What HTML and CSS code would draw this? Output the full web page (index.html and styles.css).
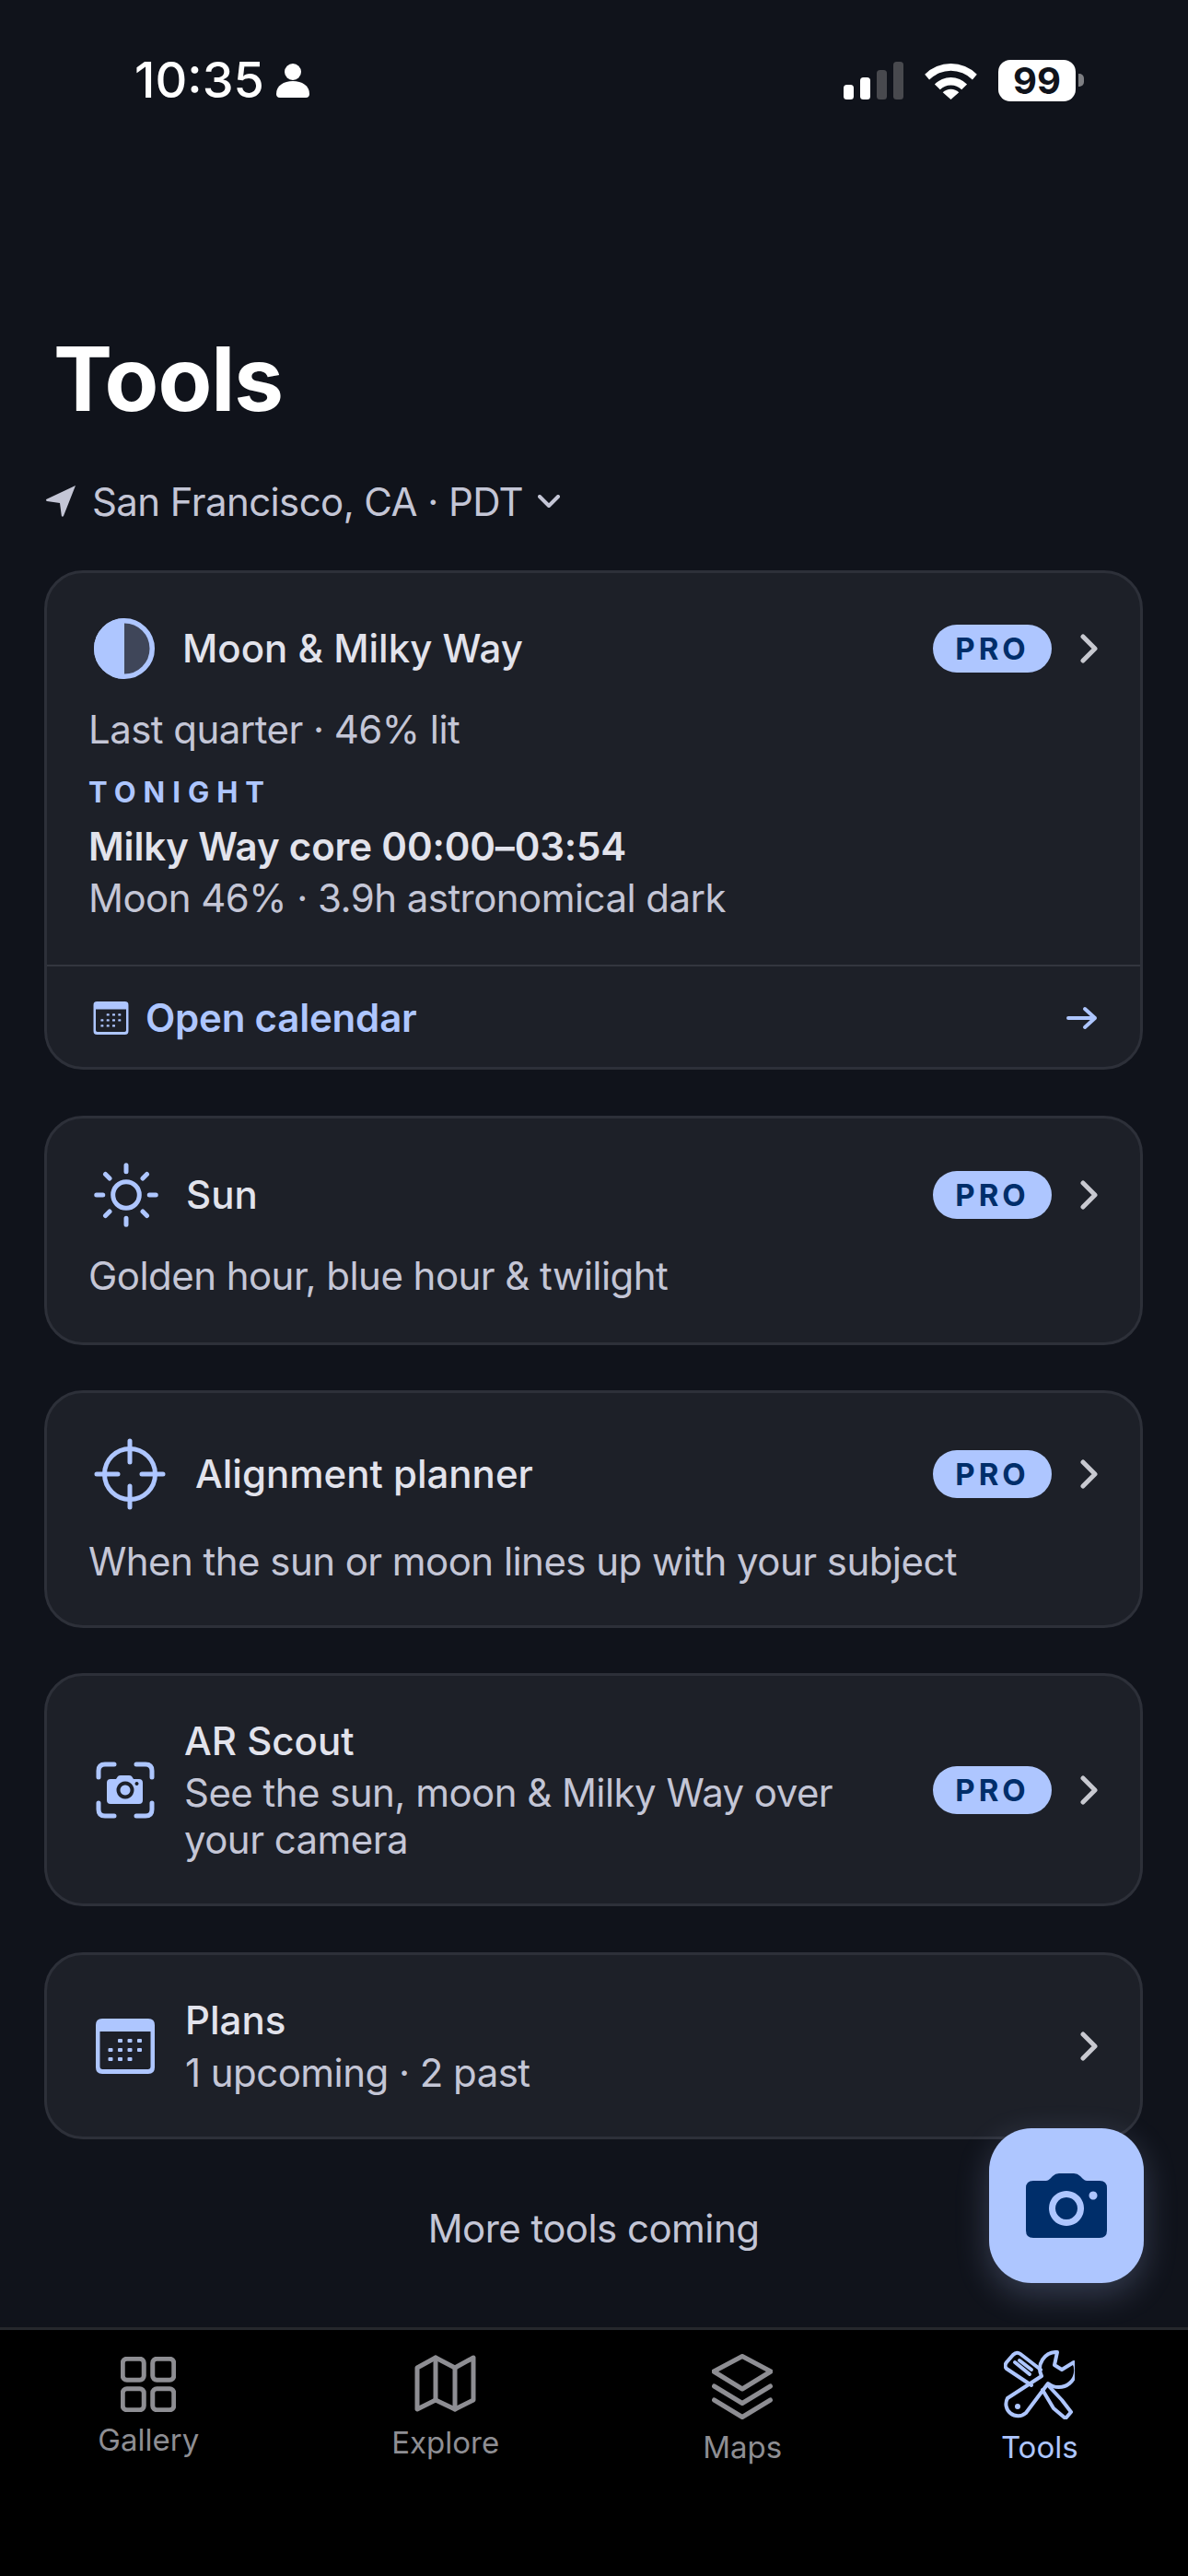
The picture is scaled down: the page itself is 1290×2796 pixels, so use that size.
FILE: index.html
```html
<!DOCTYPE html>
<html lang="en">
<head>
<meta charset="utf-8">
<title>Tools</title>
<link rel="stylesheet" href="styles.css">
</head>
<body>
<div class="screen">
  <header class="status">
    <div class="status-left">
      <span class="clock">10:35</span>
      <svg class="person" viewBox="0 0 36 38"><circle cx="18" cy="10" r="9"/><path d="M0 34c0-9 8-14 18-14s18 5 18 14c0 2-1 4-4 4H4c-3 0-4-2-4-4z"/></svg>
    </div>
    <div class="status-right">
      <svg class="signal" viewBox="0 0 65 41"><rect x="0" y="25" width="11" height="16" rx="3.5" fill="#fff"/><rect x="18" y="17" width="11" height="24" rx="3.5" fill="#fff"/><rect x="36" y="9" width="11" height="32" rx="3.5" fill="#48494e"/><rect x="54" y="0" width="11" height="41" rx="3.5" fill="#48494e"/></svg>
      <svg class="wifi" viewBox="0 0 58 42" fill="#fff"><path d="M0 14 A41 41 0 0 1 58 14L53 20A34 34 0 0 0 5 20Z"/><path d="M11 25A25 25 0 0 1 47 25L41 31A17 17 0 0 0 17 31Z"/><path d="M20 34A13 13 0 0 1 38 34L29 42Z"/></svg>
      <div class="battery"><span class="battery-level">99</span><span class="battery-cap"></span></div>
    </div>
  </header>

  <main class="content">
    <h1 class="page-title">Tools</h1>
    <div class="location">
      <svg class="loc-arrow" viewBox="0 0 32 34"><path d="M32 0 19 33c-.5 1-2 1-2.200-.2L15 19 1 17c-1.200-.2-1.400-1.700-.3-2.200z"/></svg>
      <span>San Francisco, CA · PDT</span>
      <svg class="loc-chev" viewBox="0 0 24 14"><path d="M2 2l10 10L22 2"/></svg>
    </div>

    <section class="card card-moon">
      <div class="card-body">
        <div class="row">
          <svg class="ico ico-moon" viewBox="0 0 66 66"><circle cx="33" cy="33" r="30.250" fill="#3f4659" stroke="#aec6ff" stroke-width="5.500"/><path d="M33 0a33 33 0 0 0 0 66z" fill="#aec6ff"/></svg>
          <h2 class="card-title">Moon &amp; Milky Way</h2>
          <span class="pro">PRO</span>
          <svg class="chev" viewBox="0 0 20 32"><path d="M3 3l13 13L3 29"/></svg>
        </div>
        <p class="sub moon-sub">Last quarter · 46% lit</p>
        <p class="eyebrow">TONIGHT</p>
        <p class="core">Milky Way core 00:00–03:54</p>
        <p class="sub core-sub">Moon 46% · 3.9h astronomical dark</p>
      </div>
      <div class="card-foot">
        <svg class="ico-cal-small" viewBox="0 0 64 60"><use href="#cal"/></svg>
        <span class="foot-label">Open calendar</span>
        <svg class="foot-arrow" viewBox="0 0 34 26"><path d="M2 13h29M20 3l11 10-11 10"/></svg>
      </div>
    </section>

    <section class="card card-sun">
      <div class="row">
        <svg class="ico ico-sun" viewBox="0 0 70 70"><circle cx="35" cy="35" r="14.300"/><path d="M35 2.750v7M35 60.250v7M2.750 35h7M60.250 35h7M12.500 12.500l4.500 4.500M53 53l4.500 4.500M12.500 57.500l4.500-4.500M53 17l4.500-4.500"/></svg>
        <h2 class="card-title">Sun</h2>
        <span class="pro">PRO</span>
        <svg class="chev" viewBox="0 0 20 32"><path d="M3 3l13 13L3 29"/></svg>
      </div>
      <p class="sub sun-sub">Golden hour, blue hour &amp; twilight</p>
    </section>

    <section class="card card-align">
      <div class="row">
        <svg class="ico ico-align" viewBox="0 0 78 78"><circle cx="39" cy="39" r="27.500"/><path d="M39 3v23M39 52v23M3 39h23M52 39h23"/></svg>
        <h2 class="card-title">Alignment planner</h2>
        <span class="pro">PRO</span>
        <svg class="chev" viewBox="0 0 20 32"><path d="M3 3l13 13L3 29"/></svg>
      </div>
      <p class="sub align-sub">When the sun or moon lines up with your subject</p>
    </section>

    <section class="card card-ar">
      <div class="row row-full">
        <svg class="ico ico-ar" viewBox="0 0 64 62"><path class="corner" d="M3 17V10q0-7 7-7h10M44 3h10q7 0 7 7v7M61 45v7q0 7-7 7H44M20 59H10q-7 0-7-7v-7"/><path class="cam" fill-rule="evenodd" d="M16 19h6l2-3q1-1 3-1h9q2 0 3 1l2 3h6q4 0 4 4v19q0 4-4 4H16q-4 0-4-4V23q0-4 4-4zM32 21.500a9.500 9.500 0 1 0 .01 0zM32 25.500a5.500 5.500 0 1 1-.01 0zM44.500 22a2 2 0 1 0 .01 0z"/></svg>
        <div class="stack">
          <h2 class="card-title">AR Scout</h2>
          <p class="sub stack-sub">See the sun, moon &amp; Milky Way over<br>your camera</p>
        </div>
        <span class="pro">PRO</span>
        <svg class="chev" viewBox="0 0 20 32"><path d="M3 3l13 13L3 29"/></svg>
      </div>
    </section>

    <section class="card card-plans">
      <div class="row row-full">
        <svg class="ico ico-plans" viewBox="0 0 64 60"><use href="#cal"/></svg>
        <div class="stack">
          <h2 class="card-title">Plans</h2>
          <p class="sub stack-sub plans-sub">1 upcoming · 2 past</p>
        </div>
        <svg class="chev" viewBox="0 0 20 32"><path d="M3 3l13 13L3 29"/></svg>
      </div>
    </section>

    <p class="more">More tools coming</p>

    <button class="fab" aria-label="Camera">
      <svg viewBox="0 0 88 70"><path fill-rule="evenodd" d="M8 8h14q2 0 4-2l3-3q3-3 7-3h16q4 0 7 3l3 3q2 2 4 2h14q8 0 8 8v46q0 8-8 8H8q-8 0-8-8V16q0-8 8-8zM44 19a19 19 0 1 0 .01 0zM44 26a12 12 0 1 1-.01 0zM73 19.500a4.500 4.500 0 1 0 .01 0z"/></svg>
    </button>
  </main>

  <nav class="tabs">
    <div class="tab tab-gallery">
      <svg class="tab-ico" width="60" height="60" viewBox="0 0 60 60"><rect x="2.250" y="2.250" width="23" height="23" rx="4.500"/><rect x="34.750" y="2.250" width="23" height="23" rx="4.500"/><rect x="2.250" y="34.750" width="23" height="23" rx="4.500"/><rect x="34.750" y="34.750" width="23" height="23" rx="4.500"/></svg>
      <span class="tab-label">Gallery</span>
    </div>
    <div class="tab tab-explore">
      <svg class="tab-ico" width="67" height="62" viewBox="0 0 67 62"><path d="M3 14 23 3l21 11L64 3v46L44 59 23 49 3 59z"/><path d="M23 3v46M44 14v45"/></svg>
      <span class="tab-label">Explore</span>
    </div>
    <div class="tab tab-maps">
      <svg class="tab-ico" width="66" height="71" viewBox="0 0 66 71"><path d="M33 2.500 64 19 33 38 2 19z"/><path d="M2.500 35 33 53.500 63.500 35M2.500 50 33 68.500 63.500 50"/></svg>
      <span class="tab-label">Maps</span>
    </div>
    <div class="tab tab-tools active">
      <svg class="tab-ico" width="77" height="75" viewBox="0 0 77 75"><path d="M58 2 55 16 63 21 76 13A18.500 18.500 0 0 1 48 36L24 68A13 13 0 0 1 4 52L41 28A18 18 0 0 1 58 2Z"/><path d="M40 21 18 4Q14 1 10 5L3 13Q0 17 3 20L30 38"/><path d="M42 43 54 63 67 74 73 67 63 54 48 38"/><path d="M12 13 28 26M17 11 30 21"/><circle cx="15" cy="61" r="3" class="tool-dot"/></svg>
      <span class="tab-label">Tools</span>
    </div>
  </nav>
</div>

<svg class="defs" width="0" height="0">
  <symbol id="cal" viewBox="0 0 64 60"><path fill="#aec6ff" fill-rule="evenodd" d="M7 0h50q7 0 7 7v46q0 7-7 7H7q-7 0-7-7V7q0-7 7-7zM4.500 14v38q0 3 3 3h49q3 0 3-3V14z"/><g fill="#aec6ff"><rect x="24" y="22" width="5" height="4" rx="1"/><rect x="34.500" y="22" width="5" height="4" rx="1"/><rect x="45" y="22" width="5" height="4" rx="1"/><rect x="13.500" y="32" width="5" height="4" rx="1"/><rect x="24" y="32" width="5" height="4" rx="1"/><rect x="34.500" y="32" width="5" height="4" rx="1"/><rect x="45" y="32" width="5" height="4" rx="1"/><rect x="13.500" y="42" width="5" height="4" rx="1"/><rect x="24" y="42" width="5" height="4" rx="1"/><rect x="34.500" y="42" width="5" height="4" rx="1"/></g></symbol>
</svg>
</body>
</html>
```

FILE: styles.css
```css
* { box-sizing: border-box; }
html, body { margin: 0; padding: 0; }
body { background: #10131b; color: #e2e3ec; font-family: Inter, "Liberation Sans", sans-serif; }
h1, h2, p { margin: 0; font-weight: inherit; }
.defs { position: absolute; }
.screen { width: 1290px; height: 2796px; display: flex; flex-direction: column; overflow: hidden; }

.status { height: 175px; display: flex; justify-content: space-between; align-items: flex-start; padding: 64px 113px 0 146px; flex: none; }
.status-left { display: flex; align-items: center; gap: 13px; height: 46px; }
.clock { font-size: 54px; font-weight: 500; color: #fff; line-height: 46px; }
.person { width: 36px; height: 38px; fill: #fff; }
.status-right { display: flex; align-items: center; height: 46px; }
.signal { width: 65px; height: 41px; margin-right: 23px; }
.wifi { width: 57px; height: 41px; margin-right: 23px; }
.battery { display: flex; align-items: center; }
.battery-level { width: 84px; height: 45px; border-radius: 13px; background: #fff; color: #10131b; font-size: 40px; font-weight: 700; line-height: 45px; text-align: center; }
.battery-cap { width: 6px; height: 14px; background: #7e7f83; border-radius: 0 5px 5px 0; margin-left: 3px; }

.content { flex: 1; position: relative; padding: 0 49px 0 48px; display: flex; flex-direction: column; }
.page-title { font-size: 96px; font-weight: 700; color: #fff; line-height: 116px; margin: 178px 0 0 10px; letter-spacing: -1px; }
.location { display: flex; align-items: center; height: 52px; margin: 49px 0 49px 2px; font-size: 42px; letter-spacing: -0.6px; color: #c4c6d6; }
.loc-arrow { width: 32px; height: 34px; fill: #c4c6d6; margin-right: 18px; }
.loc-chev { width: 24px; height: 14px; margin-left: 16px; fill: none; stroke: #c4c6d6; stroke-width: 4; stroke-linecap: round; stroke-linejoin: round; }

.card { background: #1d2028; border: 3px solid #2d3039; border-radius: 42px; padding: 0 45px; flex: none; margin-bottom: 49px; }
.card-moon { height: 542px; padding: 0; display: flex; flex-direction: column; margin-bottom: 50px; }
.card-body { flex: 1; padding: 0 45px; }
.card-sun { height: 249px; }
.card-align { height: 258px; }
.card-ar { height: 253px; margin-bottom: 50px; }
.card-plans { height: 203px; margin-bottom: 0; }

.row { display: flex; align-items: center; }
.card-moon .row { height: 66px; margin-top: 49px; }
.card-sun .row { height: 70px; margin-top: 48px; }
.card-align .row { height: 78px; margin-top: 49px; }
.row-full { height: 100%; }
.card-title { font-size: 42px; font-weight: 500; color: #e2e3ec; flex: 1; line-height: 52px; }
.sub { font-size: 42px; letter-spacing: -0.55px; color: #c4c6d6; line-height: 51px; }
.stack { flex: 1; }
.stack-sub { margin-top: 4px; }
.plans-sub { margin-top: 5px; }

.ico { flex: none; margin-left: 6px; }
.ico-moon { width: 66px; height: 66px; margin-right: 30px; }
.ico-sun, .ico-align, .ico-ar { fill: none; stroke: #aec6ff; stroke-linecap: round; }
.ico-sun { width: 70px; height: 70px; margin-right: 30px; stroke-width: 5; }
.ico-align { width: 78px; height: 78px; margin-right: 32px; stroke-width: 5; }
.ico-ar { width: 64px; height: 62px; margin: 0 32px 0 8px; stroke-width: 5; }
.ico-ar .cam { fill: #aec6ff; stroke: none; }
.ico-plans { width: 64px; height: 60px; margin: 0 33px 0 8px; }

.pro { flex: none; width: 129px; height: 52px; border-radius: 26px; background: #aec6ff; color: #002e6a; font-size: 33px; font-weight: 700; letter-spacing: 4px; line-height: 52px; text-align: center; }
.chev { width: 20px; height: 32px; margin: 0 0 0 31px; flex: none; fill: none; stroke: #c8c9d0; stroke-width: 5; stroke-linecap: round; stroke-linejoin: round; }

.moon-sub { margin-top: 29px; }
.eyebrow { margin-top: 23px; font-size: 31px; font-weight: 700; letter-spacing: 8px; color: #aec6ff; line-height: 40px; }
.core { margin-top: 13px; font-size: 42px; font-weight: 600; letter-spacing: -0.15px; color: #e2e3ec; line-height: 52px; }
.core-sub { margin-top: 4px; }
.sun-sub { margin-top: 27px; }
.align-sub { margin-top: 30px; }

.card-foot { height: 111px; border-top: 2px solid #33363f; display: flex; align-items: center; padding: 2px 46px 0 50px; }
.ico-cal-small { width: 39px; height: 36px; margin-right: 18px; }
.foot-label { flex: 1; font-size: 42px; font-weight: 600; letter-spacing: -0.2px; color: #aec6ff; }
.foot-arrow { width: 34px; height: 26px; fill: none; stroke: #aec6ff; stroke-width: 4; stroke-linecap: round; stroke-linejoin: round; }

.more { text-align: center; font-size: 42px; letter-spacing: -0.55px; color: #c4c6d6; margin-top: 71px; line-height: 52px; }

.fab { position: absolute; right: 48px; top: 2135px; width: 168px; height: 168px; border: none; border-radius: 46px; background: #aec6ff; box-shadow: 0 12px 36px rgba(174, 198, 255, 0.24); display: flex; align-items: center; justify-content: center; padding: 0; }
.fab svg { width: 88px; height: 70px; fill: #002e6a; }

.tabs { position: relative; height: 270px; flex: none; background: #000; border-top: 3px solid #25272c; display: grid; grid-template-columns: repeat(4, 1fr); color: #8e8e93; }
.tab { display: flex; flex-direction: column; align-items: center; }
.tab-ico { fill: none; stroke: #8e8e93; stroke-width: 5; stroke-linecap: round; stroke-linejoin: round; }
.tab-label { font-size: 33px; line-height: 40px; }
.tab-gallery { padding-top: 29px; }
.tab-explore { padding-top: 27px; }
.tab-maps { padding-top: 26px; }
.tab-tools { padding-top: 22px; }
.tab-gallery .tab-label { margin-top: 10px; }
.tab-explore .tab-label { margin-top: 13px; }
.tab-maps .tab-label { margin-top: 10px; }
.tab-tools .tab-label { margin-top: 10px; }
.active { color: #aec6ff; }
.active .tab-ico { stroke: #aec6ff; stroke-width: 4; }
.tool-dot { fill: #aec6ff; stroke: none; }
```
